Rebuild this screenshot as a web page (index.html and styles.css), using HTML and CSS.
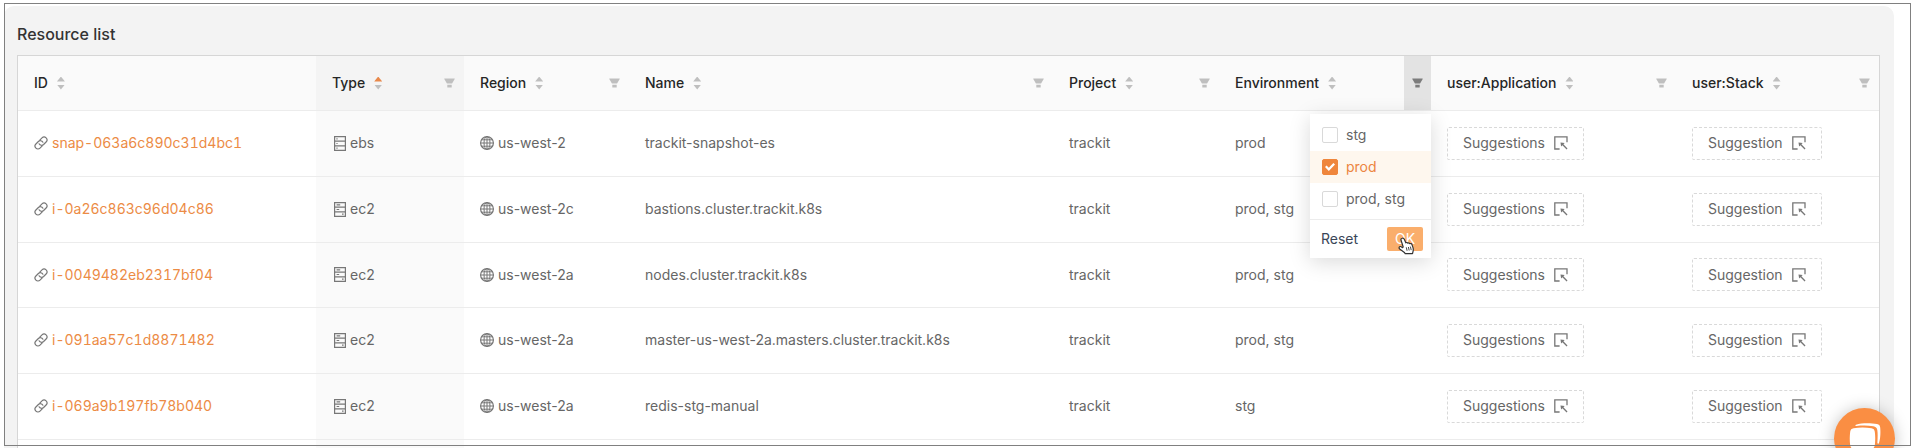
FILE: index.html
```
<!DOCTYPE html>
<html lang="en">
<head>
<meta charset="utf-8">
<title>Resource list</title>
<link rel="stylesheet" href="styles.css">
</head>
<body>
<svg class="sprite" aria-hidden="true">
  <symbol id="i-link" viewBox="0 0 14 14"><g transform="rotate(-45 7 7)" fill="none" stroke="currentColor" stroke-width="1.2" stroke-linecap="round"><path d="M5.800 9.900H2.700a2.900 2.900 0 0 1 0-5.800h3.500a2.900 2.900 0 0 1 2.700 3.700"/><path d="M8.200 4.100h3.100a2.900 2.900 0 0 1 0 5.800H7.800a2.900 2.900 0 0 1-2.700-3.700"/></g></symbol>
  <symbol id="i-db" viewBox="0 0 12 15"><path d="M.6.6h10.8v13.8H.6zM.6 5.2h10.8M.6 9.8h10.8M2.4 2.9h1.2M2.4 7.5h1.2M2.4 12.1h1.2" fill="none" stroke="currentColor" stroke-width="1.2"/></symbol>
  <symbol id="i-server" viewBox="0 0 12 15"><path d="M.6.6h10.8v13.8H.6zM.6 5.2h10.8M.6 9.8h10.8M2.6 2.9h3.6M2.6 7.5h2.6M8 12.1h1.6" fill="none" stroke="currentColor" stroke-width="1.2"/></symbol>
  <symbol id="i-globe" viewBox="0 0 14 14"><g fill="none" stroke="currentColor"><circle cx="7" cy="7" r="6.4" stroke-width="1.2"/><ellipse cx="7" cy="7" rx="3" ry="6.4"/><path d="M7 .6v12.8M.6 7h12.8M1.6 3.8h10.8M1.6 10.2h10.8"/></g></symbol>
  <symbol id="i-select" viewBox="0 0 14 14"><path d="M5.600 13H.8V.8H13v5.400" fill="none" stroke="currentColor" stroke-width="1.300"/><path d="M6.500 6.500l4.200.5-1.300 1.300 4.100 4.200-.9.900-4.200-4.100-1.300 1.300z" fill="currentColor"/></symbol>
  <symbol id="i-filter" viewBox="0 0 12 12"><path d="M.6 1h10.8c.3 0 .4.3.3.5L8.8 6.6H3.2L.3 1.5C.2 1.3.3 1 .6 1zM3.6 8h4.8v2.6c0 .2-.2.4-.4.4H4c-.2 0-.4-.2-.4-.4z" fill="currentColor"/></symbol>
</svg>

<main class="panel">
  <h1 class="panel-title">Resource list</h1>
  <table class="grid">
    <colgroup>
      <col class="c-id"><col class="c-type"><col class="c-region"><col class="c-name"><col class="c-project"><col class="c-env"><col class="c-app"><col class="c-stack">
    </colgroup>
    <thead>
      <tr>
        <th><div class="head"><button class="sort">ID<span class="carets"></span></button></div></th>
        <th class="sorted"><div class="head"><button class="sort">Type<span class="carets asc"></span></button><button class="filter" aria-label="Filter type"><svg><use href="#i-filter"/></svg></button></div></th>
        <th><div class="head"><button class="sort">Region<span class="carets"></span></button><button class="filter" aria-label="Filter region"><svg><use href="#i-filter"/></svg></button></div></th>
        <th><div class="head"><button class="sort">Name<span class="carets"></span></button><button class="filter" aria-label="Filter name"><svg><use href="#i-filter"/></svg></button></div></th>
        <th><div class="head"><button class="sort">Project<span class="carets"></span></button><button class="filter" aria-label="Filter project"><svg><use href="#i-filter"/></svg></button></div></th>
        <th><div class="head"><button class="sort">Environment<span class="carets"></span></button><button class="filter open" aria-label="Filter environment"><svg><use href="#i-filter"/></svg></button>
          <form class="menu">
            <div class="options">
              <label class="option"><input type="checkbox">stg</label>
              <label class="option picked"><input type="checkbox" checked>prod</label>
              <label class="option"><input type="checkbox">prod, stg</label>
            </div>
            <div class="actions">
              <button type="reset" class="reset">Reset</button>
              <button type="button" class="ok">OK</button>
            </div>
            <svg class="pointer" viewBox="0 0 17 18" aria-hidden="true"><path d="M4.2 1.2c.9-.4 1.7.1 2.1 1l1.500 3.600c.5-.5 1.600-.4 2 .4.7-.5 1.600-.3 2 .5 1-.5 1.900 0 2.200.9l1 3c.5 1.600.4 2.500 0 4l-.5 2.100H7.200l-.8-1.300L1.700 12c-.9-.9-.8-1.800-.1-2.300.8-.5 1.700 0 2.700 1L5.200 10 3 3c-.3-.8.300-1.500 1.200-1.800z" fill="#fff" stroke="#333" stroke-width="1.200" stroke-linejoin="round"/><path d="M8.300 10.300l.8 3.500M10.400 10l.8 3.500M12.400 9.600l.8 3.500" stroke="#333" stroke-width=".9"/></svg>
          </form></div></th>
        <th><div class="head"><button class="sort">user:Application<span class="carets"></span></button><button class="filter" aria-label="Filter application"><svg><use href="#i-filter"/></svg></button></div></th>
        <th><div class="head"><button class="sort">user:Stack<span class="carets"></span></button><button class="filter" aria-label="Filter stack"><svg><use href="#i-filter"/></svg></button></div></th>
      </tr>
    </thead>
    <tbody>
      <tr>
        <td><div class="item"><svg class="ico"><use href="#i-link"/></svg><a href="#">snap-063a6c890c31d4bc1</a></div></td>
        <td class="sorted"><div class="item"><svg class="ico tall"><use href="#i-db"/></svg>ebs</div></td>
        <td><div class="item"><svg class="ico"><use href="#i-globe"/></svg>us-west-2</div></td>
        <td>trackit-snapshot-es</td><td>trackit</td><td>prod</td>
        <td><button class="suggest">Suggestions<svg class="ico"><use href="#i-select"/></svg></button></td>
        <td><button class="suggest">Suggestion<svg class="ico"><use href="#i-select"/></svg></button></td>
      </tr>
      <tr>
        <td><div class="item"><svg class="ico"><use href="#i-link"/></svg><a href="#">i-0a26c863c96d04c86</a></div></td>
        <td class="sorted"><div class="item"><svg class="ico tall"><use href="#i-server"/></svg>ec2</div></td>
        <td><div class="item"><svg class="ico"><use href="#i-globe"/></svg>us-west-2c</div></td>
        <td>bastions.cluster.trackit.k8s</td><td>trackit</td><td>prod, stg</td>
        <td><button class="suggest">Suggestions<svg class="ico"><use href="#i-select"/></svg></button></td>
        <td><button class="suggest">Suggestion<svg class="ico"><use href="#i-select"/></svg></button></td>
      </tr>
      <tr>
        <td><div class="item"><svg class="ico"><use href="#i-link"/></svg><a href="#">i-0049482eb2317bf04</a></div></td>
        <td class="sorted"><div class="item"><svg class="ico tall"><use href="#i-server"/></svg>ec2</div></td>
        <td><div class="item"><svg class="ico"><use href="#i-globe"/></svg>us-west-2a</div></td>
        <td>nodes.cluster.trackit.k8s</td><td>trackit</td><td>prod, stg</td>
        <td><button class="suggest">Suggestions<svg class="ico"><use href="#i-select"/></svg></button></td>
        <td><button class="suggest">Suggestion<svg class="ico"><use href="#i-select"/></svg></button></td>
      </tr>
      <tr>
        <td><div class="item"><svg class="ico"><use href="#i-link"/></svg><a href="#">i-091aa57c1d8871482</a></div></td>
        <td class="sorted"><div class="item"><svg class="ico tall"><use href="#i-server"/></svg>ec2</div></td>
        <td><div class="item"><svg class="ico"><use href="#i-globe"/></svg>us-west-2a</div></td>
        <td>master-us-west-2a.masters.cluster.trackit.k8s</td><td>trackit</td><td>prod, stg</td>
        <td><button class="suggest">Suggestions<svg class="ico"><use href="#i-select"/></svg></button></td>
        <td><button class="suggest">Suggestion<svg class="ico"><use href="#i-select"/></svg></button></td>
      </tr>
      <tr>
        <td><div class="item"><svg class="ico"><use href="#i-link"/></svg><a href="#">i-069a9b197fb78b040</a></div></td>
        <td class="sorted"><div class="item"><svg class="ico tall"><use href="#i-server"/></svg>ec2</div></td>
        <td><div class="item"><svg class="ico"><use href="#i-globe"/></svg>us-west-2a</div></td>
        <td>redis-stg-manual</td><td>trackit</td><td>stg</td>
        <td><button class="suggest">Suggestions<svg class="ico"><use href="#i-select"/></svg></button></td>
        <td><button class="suggest">Suggestion<svg class="ico"><use href="#i-select"/></svg></button></td>
      </tr>
      <tr><td></td><td class="sorted"></td><td></td><td></td><td></td><td></td><td></td><td></td></tr>
    </tbody>
  </table>
</main>

<button class="chat" aria-label="Open chat"><svg viewBox="0 0 32 32" aria-hidden="true"><path d="M7 1.700C13-.2 22 .1 28 1c2 .3 3 1.500 3.200 3.500.5 5 .2 11-1.200 15.500-.3 1-1.600.8-1.600-.2.200-4.800.5-9.300-.1-12.800-.3-2.300-1.700-3.400-4-3.800C18.500 2.300 12.500 2.400 7.300 3c-1 .1-1.200-1-.3-1.300z" fill="#fff"/><path d="M4.500 5.300c6-1 12-1 18 0 2 .3 3 1.500 3.300 3.500.6 4.500.6 9 0 13.500-.3 2-1.300 3.200-3.300 3.500v4.700l-6-4.200c-4 .2-8 .1-12-.5-2-.3-3-1.500-3.300-3.500-.6-4.500-.6-9 0-13.500.3-2 1.300-3.200 3.300-3.500z" fill="#fff"/></svg></button>
</body>
</html>
```
FILE: styles.css
```
* { box-sizing: border-box; }

body {
  margin: 0;
  height: 100vh;
  overflow: hidden;
  padding: 6px 19px 0 4px;
  background: #fff;
  color: #666;
  font: 14px/22px Inter, "Liberation Sans", sans-serif;
}

/* thin outline around the whole view */
body::after {
  content: "";
  position: fixed;
  inset: 3px 2px 2px 4px;
  border: 1px solid #808080;
  pointer-events: none;
  z-index: 5;
}

.sprite { display: none; }

.panel {
  padding: 16px 14px 16px 13px;
  border-radius: 10px 10px 0 0;
  background: #f3f3f3;
}

.panel-title {
  margin: 0 0 9px;
  color: #333;
  font-size: 16px;
  font-weight: 500;
  line-height: 24px;
}

.grid {
  width: 100%;
  table-layout: fixed;
  border: 1px solid #d6d6d6;
  border-spacing: 0;
  background: #fff;
}

.c-id { width: 298px; }
.c-type { width: 148px; }
.c-region { width: 165px; }
.c-project { width: 166px; }
.c-env { width: 212px; }
.c-app { width: 245px; }
.c-stack { width: 203px; }

th {
  padding: 0;
  border-bottom: 1px solid #ececec;
  background: #fafafa;
  text-align: left;
}

th.sorted { background: #f4f4f4; }
td.sorted { background: #fafafa; }

td {
  height: 66px;
  padding: 0 16px 1px;
  border-bottom: 1px solid #ececec;
  white-space: nowrap;
}

tr:nth-child(3n) td { height: 65px; }

.head {
  position: relative;
  display: flex;
  justify-content: space-between;
  height: 54px;
}

button {
  margin: 0;
  padding: 0;
  border: 0;
  background: none;
  color: inherit;
  font: inherit;
}

.sort {
  display: flex;
  align-items: center;
  gap: 9px;
  padding-left: 16px;
  color: #262626;
  font-weight: 500;
}

.carets {
  display: grid;
  gap: 3px;
}

.carets::before,
.carets::after {
  content: "";
  width: 8px;
  height: 5px;
  background: #bfbfbf;
  clip-path: polygon(50% 0, 100% 100%, 0 100%);
}

.carets::after { clip-path: polygon(0 0, 100% 0, 50% 100%); }
.carets.asc::before { background: #e8884a; }

.filter {
  display: grid;
  place-items: center;
  width: 27px;
  padding-right: 2px;
  color: #bfbfbf;
}

.filter svg { width: 11px; height: 12px; }
.filter.open { padding: 0; background: #e3e3e3; color: #7c7c7c; }

.item {
  display: flex;
  align-items: center;
  gap: 4px;
}

.ico { flex: none; width: 14px; height: 14px; color: #777; }
.tall { width: 12px; height: 15px; margin-left: 2px; }

a {
  color: #ec8b45;
  font-variant-numeric: tabular-nums;
  text-decoration: none;
}

.suggest {
  display: flex;
  align-items: center;
  gap: 9px;
  height: 33px;
  padding: 0 15px;
  border: 1px dashed #d9d9d9;
  border-radius: 2px;
}

.menu {
  position: absolute;
  top: 58px;
  right: 0;
  z-index: 2;
  width: 121px;
  background: #fff;
  color: #666;
  font-weight: 400;
  box-shadow: 0 4px 20px rgba(0, 0, 0, .15);
}

.options {
  padding: 5px 0 4px;
  border-bottom: 1px solid #ececec;
}

.option {
  display: flex;
  align-items: center;
  gap: 8px;
  height: 32px;
  padding: 0 12px;
}

.picked { background: #fef7ee; color: #ec8540; }

.option input {
  appearance: none;
  display: grid;
  place-items: center;
  width: 16px;
  height: 16px;
  margin: 0;
  border: 1px solid #d9d9d9;
  border-radius: 2px;
  background: #fff;
}

.option input:checked { border-color: #ef863c; background: #ef863c; }

.option input:checked::after {
  content: "";
  width: 10px;
  height: 8px;
  background: #fff;
  clip-path: polygon(0 50%, 16% 32%, 38% 60%, 84% 0, 100% 18%, 38% 100%);
}

.actions {
  display: flex;
  align-items: center;
  justify-content: space-between;
  padding: 7px 8px 7px 11px;
}

.reset { color: #3a4657; }

.ok {
  width: 36px;
  height: 24px;
  border-radius: 2px;
  background: #faae6c;
  color: #fff;
}

.pointer {
  position: absolute;
  right: 16px;
  bottom: 3px;
  width: 17px;
  height: 18px;
}

.chat {
  position: fixed;
  right: 18px;
  bottom: -21px;
  z-index: 3;
  display: grid;
  place-items: center;
  width: 61px;
  height: 61px;
  border-radius: 50%;
  background: #fa8e43;
  box-shadow: 0 1px 16px rgba(0, 0, 0, .25);
}

.chat svg { width: 32px; height: 32px; }
```
